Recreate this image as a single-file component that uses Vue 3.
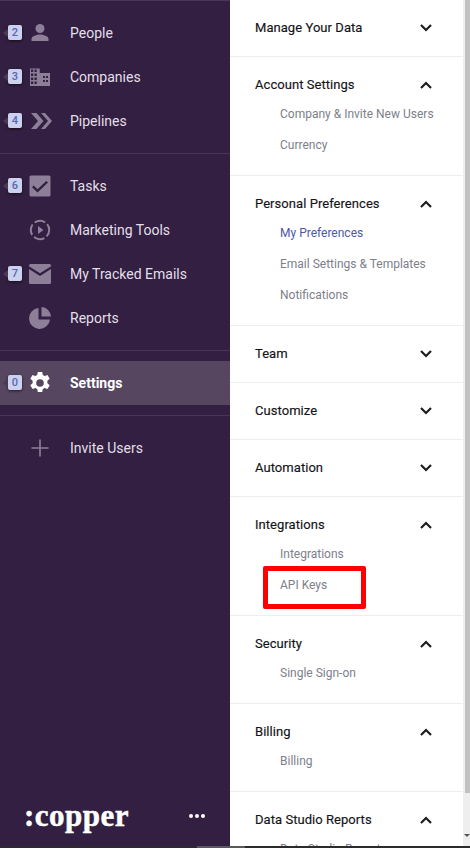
<template>
  <div class="page">
    <aside class="sidebar">
      <nav class="nav">
        <template v-for="(group, g) in navGroups" :key="g">
          <div class="nav-group">
            <div v-for="item in group.items" :key="item.label" class="nav-item" :class="{ active: item.active }">
              <span v-if="item.badge" class="badge">{{ item.badge }}</span>
              <span class="nav-icon">
                <svg viewBox="0 0 24 24" width="24" height="24" v-html="icons[item.icon]"></svg>
              </span>
              <span class="nav-label">{{ item.label }}</span>
            </div>
          </div>
        </template>
      </nav>
      <div class="side-foot">
        <span class="logo">:copper</span>
        <span class="more"><i></i><i></i><i></i></span>
      </div>
    </aside>

    <main class="panel">
      <section v-for="s in sections" :key="s.title" class="section" :class="{ open: s.links }">
        <div class="section-head">
          <h3>{{ s.title }}</h3>
          <svg class="chev" viewBox="0 0 14 10" width="14" height="10">
            <path :d="s.links ? 'M2 8l5-5 5 5' : 'M2 2l5 5 5-5'" fill="none" stroke="#1d1d1d" stroke-width="2.2" />
          </svg>
        </div>
        <ul v-if="s.links" class="links">
          <li v-for="l in s.links" :key="l" :class="{ current: l === 'My Preferences' }">
            {{ l }}
            <span v-if="l === 'API Keys'" class="highlight"></span>
          </li>
        </ul>
      </section>
    </main>

    <div class="scrollbar"><div class="thumb"></div><span class="arrow"></span></div>
    <div class="bottom-bar"><div class="bottom-thumb"></div></div>
  </div>
</template>

<script setup>
const icons = {
  person: '<circle cx="12" cy="7.5" r="4.5"/><path d="M3.5 20v-2c0-3 5.5-4.5 8.5-4.5s8.5 1.500 8.500 4.500v2z"/>',
  building: '<path fill-rule="evenodd" d="M2 3.500h9.700V8H22v13H2zM3 4.500v2.600h2.300V4.500zm3.500 0v2.600h2.300V4.500zM3 8.500v2.600h2.300V8.500zm3.500 0v2.600h2.300V8.500zM3 12.500v2.600h2.300v-2.600zm3.500 0v2.600h2.300v-2.600zM3 16.500v2.600h2.300v-2.600zm3.500 0v2.600h2.300v-2.600zM15 11v2h2v-2zm3 0v2h2v-2zM15 15v2h2v-2zm3 0v2h2v-2z"/>',
  pipeline: '<path d="M3 4h5.500l7 8-7 8H3l7-8z"/><path d="M13 4h4l7 8-7 8h-4l7-8z"/>',
  task: '<path fill-rule="evenodd" d="M3 1.500h18a1.500 1.500 0 0 1 1.500 1.500v18a1.500 1.500 0 0 1-1.500 1.500H3A1.500 1.500 0 0 1 1.500 21V3A1.500 1.500 0 0 1 3 1.500zm6.500 17L20 8.500 18.300 7l-8.800 8.200-3.800-3.600L4 13.200z"/>',
  marketing: '<circle cx="12" cy="12" r="9.200" fill="none" stroke="currentColor" stroke-width="2" stroke-dasharray="11 2.800" stroke-dashoffset="4"/><path d="M10 8l5.500 4-5.500 4z"/>',
  mail: '<path d="M2.500 2h19A1.500 1.500 0 0 1 23 3.500v.7l-11 7-11-7v-.7A1.500 1.500 0 0 1 2.500 2z"/><path d="M1 7l11 7 11-7v13.500a1.500 1.500 0 0 1-1.500 1.500h-19A1.500 1.500 0 0 1 1 20.500z"/>',
  pie: '<path d="M10.500 2v11.500H22A10.500 10.500 0 1 1 10.500 2z"/><path d="M13.500 1a10 10 0 0 1 9.500 9.500h-9.500z"/>',
  gear: '<path fill-rule="evenodd" d="M9.800 1h4.400l.6 3 1.800 1 2.900-1 2.200 3.800-2.300 2v2.400l2.300 2-2.200 3.800-2.900-1-1.800 1-.6 3H9.800l-.6-3-1.800-1-2.900 1-2.200-3.800 2.300-2v-2.400l-2.300-2L4.500 4l2.900 1 1.800-1zM12 8.200a3.800 3.800 0 1 0 0 7.600 3.800 3.800 0 0 0 0-7.600z"/>',
  plus: '<path d="M11.200 3.500h1.600v7.700h7.700v1.600h-7.700v7.700h-1.600v-7.700H3.500v-1.600h7.700z"/>'
}

const navGroups = [
  { items: [
    { label: 'People', icon: 'person', badge: 2 },
    { label: 'Companies', icon: 'building', badge: 3 },
    { label: 'Pipelines', icon: 'pipeline', badge: 4 }
  ] },
  { items: [
    { label: 'Tasks', icon: 'task', badge: 6 },
    { label: 'Marketing Tools', icon: 'marketing' },
    { label: 'My Tracked Emails', icon: 'mail', badge: 7 },
    { label: 'Reports', icon: 'pie' }
  ] },
  { items: [
    { label: 'Settings', icon: 'gear', badge: '0', active: true }
  ] },
  { items: [
    { label: 'Invite Users', icon: 'plus' }
  ] }
]

const sections = [
  { title: 'Manage Your Data' },
  { title: 'Account Settings', links: ['Company & Invite New Users', 'Currency'] },
  { title: 'Personal Preferences', links: ['My Preferences', 'Email Settings & Templates', 'Notifications'] },
  { title: 'Team' },
  { title: 'Customize' },
  { title: 'Automation' },
  { title: 'Integrations', links: ['Integrations', 'API Keys'] },
  { title: 'Security', links: ['Single Sign-on'] },
  { title: 'Billing', links: ['Billing'] },
  { title: 'Data Studio Reports', links: ['Data Studio Reports'] }
]
</script>

<style scoped>
.page { position: relative; display: flex; width: 470px; height: 848px; overflow: hidden; background: #fff; font-family: Roboto, "Liberation Sans", sans-serif; }
.sidebar { width: 230px; flex-shrink: 0; background: #331f42; display: flex; flex-direction: column; }
.nav { flex: 1; border-top: 1px solid #49365a; }
.nav-group { padding: 10px 0; border-bottom: 1px solid #47345a; }
.nav-group:last-child { border-bottom: none; }
.nav-item { position: relative; display: flex; align-items: center; height: 44px; }
.nav-item.active { background: #56465f; color: #fff; }
.badge { position: absolute; left: 8px; top: 14px; width: 14px; height: 15px; display: flex; align-items: center; justify-content: center; background: #ccd1ee; color: #5866b8; font-size: 11px; font-weight: 500; border-radius: 2px; box-shadow: 0 1px 3px rgba(0, 0, 0, 0.6); }
.badge::before { content: ""; position: absolute; left: -5px; top: 4px; border: 4px solid transparent; border-left: none; border-right: 5px solid #4a3a55; }
.nav-icon { width: 24px; height: 24px; margin-left: 28px; color: #8e7f99; }
.nav-icon svg { display: block; fill: currentColor; }
.active .nav-icon { color: #fff; }
.nav-label { margin-left: 18px; font-size: 14px; color: #e2dfe8; }
.active .nav-label { color: #fff; font-weight: 700; }
.side-foot { height: 64px; display: flex; align-items: center; justify-content: space-between; padding: 0 25px 0 24px; }
.logo { font-family: "Liberation Serif", serif; font-size: 31px; line-height: 36px; font-weight: 700; color: #fff; letter-spacing: 0.5px; -webkit-text-stroke: 0.5px #fff; }
.more { display: flex; gap: 2px; }
.more i { width: 4px; height: 4px; border-radius: 50%; background: #fff; }
.panel { width: 233px; height: 848px; flex-shrink: 0; overflow: hidden; }
.section { padding: 0 25px; height: 57px; box-sizing: border-box; border-bottom: 1px solid #eceef0; }
.section.open { height: auto; padding-bottom: 14px; }
.section-head { display: flex; align-items: center; justify-content: space-between; height: 56px; padding-right: 5px; }
h3 { margin: 0 0 2px; font-size: 13px; font-weight: 400; color: #141418; letter-spacing: 0.05px; -webkit-text-stroke: 0.15px #141418; }
.chev { flex-shrink: 0; }
.links { list-style: none; margin: -14px 0 0; padding: 0 0 0 25px; }
.links li { position: relative; height: 31px; line-height: 31px; font-size: 12px; color: #7d8089; white-space: nowrap; }
.links li.current { color: #4d57a8; }
.highlight { position: absolute; left: -17px; top: -4px; width: 103px; height: 43px; border: 5px solid #f00; border-radius: 2px; box-sizing: border-box; }
.scrollbar { position: absolute; right: 0; top: 0; bottom: 0; width: 7px; background: #eeeeee; }
.thumb { margin-left: 2px; height: 793px; background: #c1c1c1; }
.arrow { position: absolute; right: 0; bottom: 11px; width: 0; height: 0; border: 3px solid transparent; border-top: 3px solid #555; border-bottom: none; }
.bottom-bar { position: absolute; left: 0; right: 0; bottom: 0; height: 2px; background: #2b2b2b; }
.bottom-thumb { margin-left: 197px; width: 48px; height: 2px; background: #5a5a5a; }
</style>

<style>
html, body { margin: 0; }
</style>
